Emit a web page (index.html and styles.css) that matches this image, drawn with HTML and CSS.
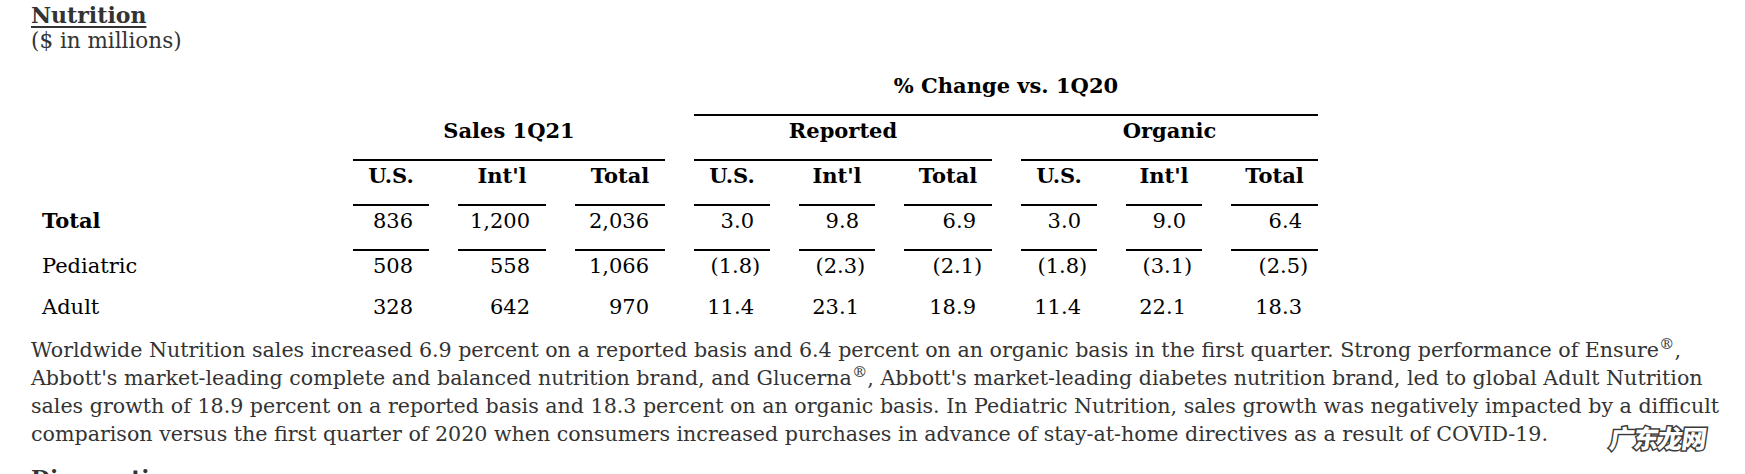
FILE: index.html
```html
<!DOCTYPE html>
<html lang="en">
<head>
<meta charset="utf-8">
<title>Nutrition</title>
<link rel="stylesheet" href="styles.css">
</head>
<body>
<div class="page">
  <h2 class="seg-title">Nutrition</h2>
  <div class="units">($ in millions)</div>

  <div class="fin-table">
    <div class="cell label"></div>
    <div class="cell grp grp-change">% Change vs. 1Q20</div>

    <div class="cell label"></div>
    <div class="cell grp grp-sales">Sales 1Q21</div>
    <div class="cell grp grp-rep">Reported</div>
    <div class="cell grp grp-org">Organic</div>

    <div class="cell label"></div>
    <div class="cell colhead">U.S.</div>
    <div class="cell colhead">Int'l</div>
    <div class="cell colhead">Total</div>
    <div class="cell colhead">U.S.</div>
    <div class="cell colhead">Int'l</div>
    <div class="cell colhead">Total</div>
    <div class="cell colhead">U.S.</div>
    <div class="cell colhead">Int'l</div>
    <div class="cell colhead">Total</div>

    <div class="cell label strong">Total</div>
    <div class="cell num ruled">836</div>
    <div class="cell num ruled">1,200</div>
    <div class="cell num ruled">2,036</div>
    <div class="cell num ruled">3.0</div>
    <div class="cell num ruled">9.8</div>
    <div class="cell num ruled">6.9</div>
    <div class="cell num ruled">3.0</div>
    <div class="cell num ruled">9.0</div>
    <div class="cell num ruled">6.4</div>

    <div class="cell label">Pediatric</div>
    <div class="cell num">508</div>
    <div class="cell num">558</div>
    <div class="cell num">1,066</div>
    <div class="cell num">(1.8<span class="cp">)</span></div>
    <div class="cell num">(2.3<span class="cp">)</span></div>
    <div class="cell num">(2.1<span class="cp">)</span></div>
    <div class="cell num">(1.8<span class="cp">)</span></div>
    <div class="cell num">(3.1<span class="cp">)</span></div>
    <div class="cell num">(2.5<span class="cp">)</span></div>

    <div class="cell label">Adult</div>
    <div class="cell num">328</div>
    <div class="cell num">642</div>
    <div class="cell num">970</div>
    <div class="cell num">11.4</div>
    <div class="cell num">23.1</div>
    <div class="cell num">18.9</div>
    <div class="cell num">11.4</div>
    <div class="cell num">22.1</div>
    <div class="cell num">18.3</div>
  </div>

  <p class="body-text">Worldwide Nutrition sales increased 6.9 percent on a reported basis and 6.4 percent on an organic basis in the first quarter. Strong performance of Ensure<sup>®</sup>, Abbott's market-leading complete and balanced nutrition brand, and Glucerna<sup>®</sup>, Abbott's market-leading diabetes nutrition brand, led to global Adult Nutrition sales growth of 18.9 percent on a reported basis and 18.3 percent on an organic basis. In Pediatric Nutrition, sales growth was negatively impacted by a difficult comparison versus the first quarter of 2020 when consumers increased purchases in advance of stay-at-home directives as a result of COVID-19.</p>

  <h2 class="seg-title next">Diagnostics</h2>
</div>
<div class="watermark">广东龙网</div>
</body>
</html>
```

FILE: styles.css
```css
html, body {
  margin: 0;
  padding: 0;
  background: #ffffff;
}

body {
  font-family: "DejaVu Serif", "Liberation Serif", serif;
  font-size: 20px;
  color: #000;
  overflow: hidden;
}

.page {
  padding: 3px 12px 0 31px;
}

.seg-title {
  margin: 0;
  font-size: 22px;
  line-height: 25px;
  font-weight: bold;
  color: #333;
  text-decoration: underline;
  text-decoration-thickness: 2px;
  text-underline-offset: 3px;
}

.units {
  font-size: 21.5px;
  line-height: 25px;
  color: #333;
}

.fin-table {
  margin-top: 18px;
  display: grid;
  grid-template-columns: 293px 76px 88px 90px 76px 76px 88px 76px 76px 87px;
  column-gap: 29px;
  font-size: 21px;
}

.cell {
  line-height: 24px;
  padding: 3px 0 16px;
  border-bottom: 2px solid transparent;
  white-space: nowrap;
}

.label {
  padding-left: 11px;
  grid-column: 1;
}

.strong {
  font-weight: bold;
}

.grp {
  font-weight: bold;
  text-align: center;
  border-bottom-color: #000;
}

.grp-change { grid-column: 5 / 11; }
.grp-sales { grid-column: 2 / 5; }
.grp-rep { grid-column: 5 / 8; }
.grp-org { grid-column: 8 / 11; }

.colhead {
  font-weight: bold;
  text-align: center;
  border-bottom-color: #000;
}

.num {
  text-align: right;
  padding-right: 16px;
}

.ruled {
  border-bottom-color: #000;
}

.fin-table > .cell:nth-last-child(-n+20) {
  padding-bottom: 14px;
  border-bottom: 0;
}

.cp {
  margin-right: -0.3em;
}

.body-text {
  margin: 3px 0 0;
  font-size: 20.6px;
  line-height: 28px;
  color: #333;
}

.body-text sup {
  font-size: 0.75em;
  line-height: 0;
  vertical-align: 0.5em;
}

.seg-title.next {
  margin-top: 18px;
}

.watermark {
  position: absolute;
  left: 1610px;
  top: 420px;
  font-family: "Noto Sans CJK SC", sans-serif;
  font-weight: 900;
  font-size: 25px;
  line-height: 34px;
  color: #fff;
  -webkit-text-stroke: 3px #3a3a3a;
  paint-order: stroke fill;
  transform: skewX(-8deg);
  letter-spacing: -1px;
}
```
